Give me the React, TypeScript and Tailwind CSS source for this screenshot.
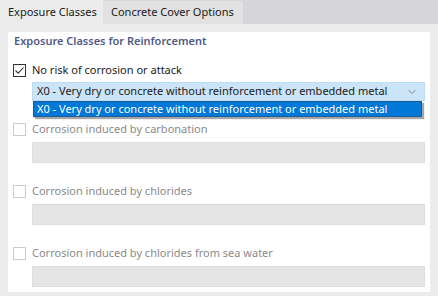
import { ChevronDown } from 'lucide-react';

const font = { fontFamily: '"Noto Sans", "Open Sans", sans-serif' };

const CheckBox = ({ checked, disabled }: { checked?: boolean; disabled?: boolean }) => (
  <span
    className={`flex h-[13px] w-[13px] shrink-0 items-center justify-center border bg-white ${
      disabled ? 'border-[#cccccc]' : 'border-[#333333]'
    }`}
  >
    {checked && (
      <svg width="11" height="11" viewBox="0 0 11 11">
        <path d="M1.5 5.5 L4.2 8.2 L9.5 2.5" fill="none" stroke="#333" strokeWidth="1.1" />
      </svg>
    )}
  </span>
);

const Option = ({ label, first }: { label: string; first?: boolean }) => (
  <div className={first ? '' : 'mt-[20px]'}>
    <div className="flex h-[16px] items-center gap-[6px]">
      <CheckBox disabled />
      <span className="whitespace-nowrap text-[11px] text-[#8a8a8a]">{label}</span>
    </div>
    <div className="ml-[19px] mt-[5px] h-[21px] border border-[#dedede] bg-[#e5e5e5]" />
  </div>
);

export default function App() {
  return (
    <div className="h-[296px] w-[438px] overflow-hidden bg-[#ececec]" style={font}>
      <div className="flex h-[24px] bg-[#d6d6da] text-[11px] text-[#1a1a1a]">
        <div className="flex w-[103px] items-center whitespace-nowrap bg-[#ececec] pl-[8px]">Exposure Classes</div>
        <div className="mt-[1px] flex w-[140px] items-center whitespace-nowrap bg-[#e1e1e1] pl-[8px]">
          Concrete Cover Options
        </div>
      </div>
      <div className="mx-[8px] mt-[8px] h-[260px] bg-white px-[5px]">
        <div className="flex h-[18px] items-center whitespace-nowrap pl-[1px] text-[11px] font-semibold text-[#505a88]">
          Exposure Classes for Reinforcement
        </div>
        <div className="mt-[12px] flex h-[16px] items-center gap-[6px]">
          <CheckBox checked />
          <span className="whitespace-nowrap text-[11px] text-[#1a1a1a]">No risk of corrosion or attack</span>
        </div>
        <div className="relative ml-[19px] mt-[4px]">
          <div className="flex h-[19px] items-center justify-between border border-[#bcdcf4] bg-[#cce4f7] pl-[4px] pr-[6px] text-[11px] text-[#1a1a1a]">
            <span className="whitespace-nowrap">X0 - Very dry or concrete without reinforcement or embedded metal</span>
            <ChevronDown size={12} strokeWidth={1.3} color="#555" />
          </div>
          <div className="absolute left-[1px] right-[3px] top-[19px] flex h-[16px] items-center whitespace-nowrap border border-[#1c5c98] bg-[#0078d7] pl-[3px] text-[11px] text-white shadow-[2px_2px_1px_rgba(0,0,0,0.35)]">
            X0 - Very dry or concrete without reinforcement or embedded metal
          </div>
        </div>
        <div className="mt-[20px]">
          <Option label="Corrosion induced by carbonation" first />
          <Option label="Corrosion induced by chlorides" />
          <Option label="Corrosion induced by chlorides from sea water" />
        </div>
      </div>
    </div>
  );
}
